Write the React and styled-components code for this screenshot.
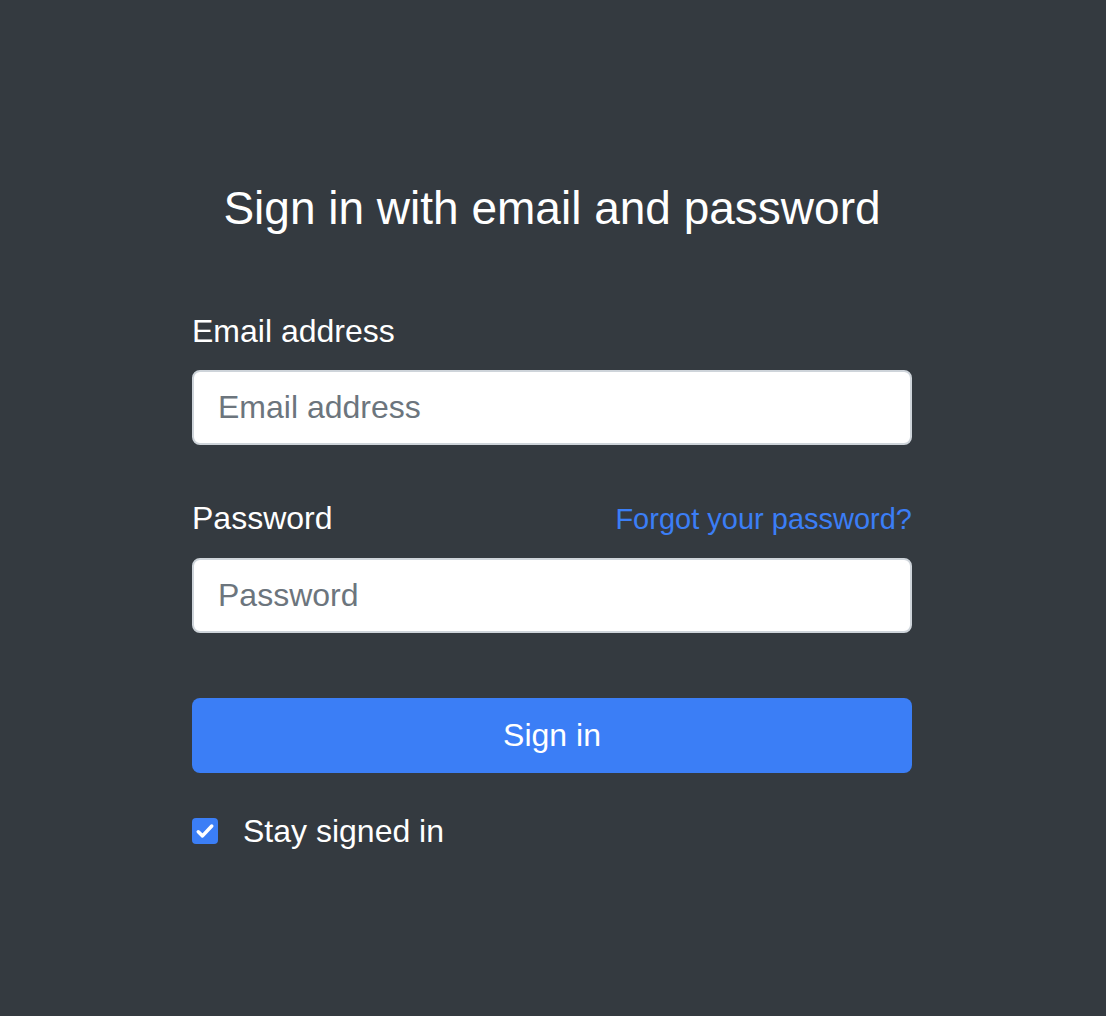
import styled, { createGlobalStyle } from "styled-components"

const GlobalStyle = createGlobalStyle`
html, body {
    margin: 0;
    padding: 0;
    background: #343a40;
}
* {
    box-sizing: border-box;
}
`

const CheckIcon = () => (
    <svg width="20" height="20" viewBox="0 0 16 16" fill="none">
        <path d="M2.6 8.6l3.4 3.3L13.4 4" stroke="#fff" strokeWidth="2.8" strokeLinecap="round" strokeLinejoin="round" />
    </svg>
)

const App = () => {
    return (
        <Page>
            <GlobalStyle />
            <Container>
                <Title>Sign in with email and password</Title>
                <Form onSubmit={(e) => e.preventDefault()}>
                    <Group>
                        <LabelRow>
                            <Label htmlFor="email">Email address</Label>
                        </LabelRow>
                        <Input id="email" type="email" placeholder="Email address" />
                    </Group>
                    <Group $last>
                        <LabelRow>
                            <Label htmlFor="password">Password</Label>
                            <Link href="#">Forgot your password?</Link>
                        </LabelRow>
                        <Input id="password" type="password" placeholder="Password" />
                    </Group>
                    <Button type="submit">Sign in</Button>
                    <CheckRow>
                        <Box><CheckIcon /></Box>
                        <CheckText>Stay signed in</CheckText>
                    </CheckRow>
                </Form>
            </Container>
        </Page>
    )
}

export default App

const Page = styled.div`
min-height: 100vh;
background: #343a40;
padding-top: 180px;
font-family: "Liberation Sans", Arial, sans-serif;
color: #fff;
`

const Container = styled.div`
width: 720px;
margin-left: 192px;
display: flex;
flex-direction: column;
`

const Title = styled.h1`
margin: 0 0 71px 0;
font-size: 46px;
line-height: 56px;
font-weight: 400;
text-align: center;
color: #fff;
`

const Form = styled.form`
display: flex;
flex-direction: column;
`

const Group = styled.div`
display: flex;
flex-direction: column;
margin-bottom: ${(p) => (p.$last ? "65px" : "49px")};
`

const LabelRow = styled.div`
display: flex;
justify-content: space-between;
align-items: baseline;
margin-bottom: 15px;
`

const Label = styled.label`
font-size: 32px;
line-height: 48px;
color: #fff;
`

const Link = styled.a`
font-size: 29px;
line-height: 48px;
color: #3b7ef6;
text-decoration: none;
`

const Input = styled.input`
height: 75px;
width: 100%;
border: 2px solid #ced4da;
border-radius: 8px;
background: #fff;
padding: 0 24px;
font-family: "Liberation Sans", Arial, sans-serif;
font-size: 32px;
color: #495057;
outline: none;
&::placeholder {
    color: #6c757d;
}
`

const Button = styled.button`
height: 75px;
width: 100%;
border: none;
border-radius: 8px;
background: #3b7ef6;
color: #fff;
font-family: "Liberation Sans", Arial, sans-serif;
font-size: 32px;
cursor: pointer;
margin-bottom: 34px;
`

const CheckRow = styled.label`
display: flex;
align-items: center;
height: 48px;
gap: 25px;
`

const Box = styled.span`
width: 26px;
height: 26px;
border-radius: 4px;
background: #3b7ef6;
display: flex;
align-items: center;
justify-content: center;
`

const CheckText = styled.span`
font-size: 32px;
line-height: 48px;
color: #fff;
`
